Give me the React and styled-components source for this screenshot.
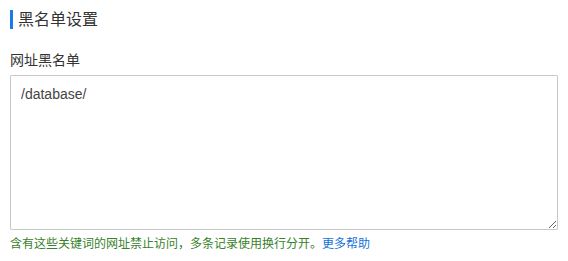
import React from "react";
import styled, { createGlobalStyle } from "styled-components";

const GlobalStyle = createGlobalStyle`
  body {
    margin: 0;
    background: #fff;
    font-family: "Helvetica Neue", "Liberation Sans", "Noto Sans CJK SC", sans-serif;
  }
`;

const Page = styled.div`
  padding: 10px;
  display: flex;
  flex-direction: column;
`;

const Title = styled.h2`
  margin: 0;
  border-left: 3px solid #1a7ae6;
  padding-left: 5px;
  font-size: 16px;
  line-height: 19px;
  font-weight: normal;
  color: #333;
`;

const Label = styled.label`
  margin-top: 21px;
  font-size: 14px;
  line-height: 20px;
  color: #333;
`;

const Input = styled.textarea`
  margin-top: 5px;
  box-sizing: border-box;
  width: 548px;
  height: 155px;
  padding: 8px 10px;
  border: 1px solid #c8c8c8;
  border-radius: 1px;
  font-family: "Liberation Sans", "Noto Sans CJK SC", sans-serif;
  font-size: 14px;
  line-height: 20px;
  color: #444;
  resize: vertical;
  outline: none;
`;

const Help = styled.p`
  margin: 5px 0 0;
  font-size: 12px;
  line-height: 18px;
  color: #368129;

  a {
    color: #1472d8;
    text-decoration: none;
  }
`;

export default function App() {
  return (
    <>
      <GlobalStyle />
      <Page>
        <Title>黑名单设置</Title>
        <Label htmlFor="blacklist">网址黑名单</Label>
        <Input id="blacklist" defaultValue="/database/" />
        <Help>
          含有这些关键词的网址禁止访问，多条记录使用换行分开。<a href="#">更多帮助</a>
        </Help>
      </Page>
    </>
  );
}
